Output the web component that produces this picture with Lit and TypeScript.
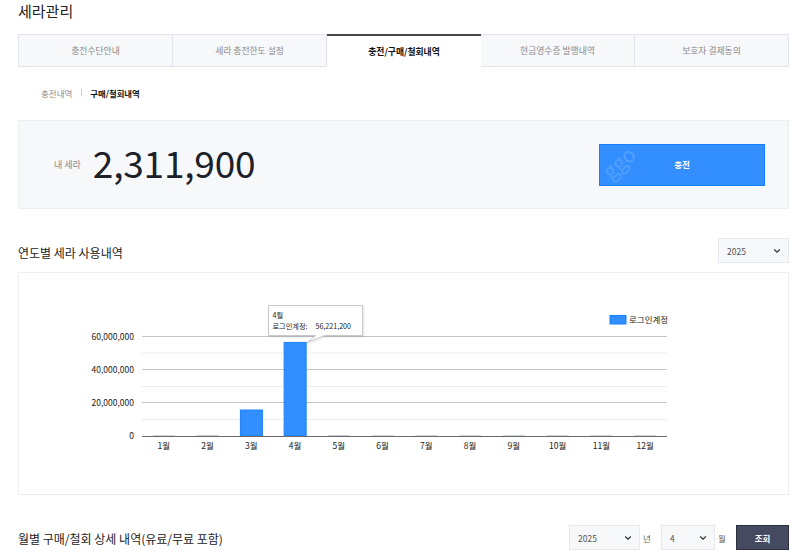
import { LitElement, html, css, svg } from 'lit';
import { customElement } from 'lit/decorators.js';

const tabs = ['충전수단안내', '세라 충전한도 설정', '충전/구매/철회내역', '현금영수증 발행내역', '보호자 결제동의'];
const months = [0.15, 0.4, 15.6, 56.2, 0.4, 0.2, 0.15, 0.15, 0.15, 0.15, 0.15, 0.15];

const PLOT_LEFT = 142;
const PLOT_RIGHT = 667;
const PLOT_BASE = 436;
const PER_MILLION = 33.3 / 20;

@customElement('usage-chart')
export class UsageChart extends LitElement {
  static styles = css`
    :host {
      display: block;
      height: 223px;
      box-sizing: border-box;
      border: 1px solid #eceef1;
    }
    svg {
      display: block;
    }
    text {
      font-family: "Noto Sans CJK KR", "Noto Sans", sans-serif;
      font-size: 8.5px;
      fill: #222;
    }
    text.tip {
      font-size: 7.2px;
    }
    text.tip-value {
      font-size: 7.1px;
    }
    .bubble {
      filter: drop-shadow(1px 1px 1px rgba(0, 0, 0, 0.1));
    }
  `;

  render() {
    const step = (PLOT_RIGHT - PLOT_LEFT) / 12;
    const lines = [336.5, 353, 369.5, 386.5, 402.5, 419.5];
    return html`
      <svg width="769" height="221" viewBox="19 273 769 221">
        ${lines.map((y, i) => svg`
          <line x1=${PLOT_LEFT} x2=${PLOT_RIGHT} y1=${y} y2=${y}
            stroke=${i % 2 ? '#ededed' : '#c4c4c4'} />`)}
        ${[['60,000,000', 340], ['40,000,000', 373], ['20,000,000', 406], ['0', 439]].map(([t, y]) => svg`
          <text x="134" y=${y} text-anchor="end">${t}</text>`)}
        ${months.map((v, i) => {
          const h = Math.max(v * PER_MILLION, 0.6);
          const big = v > 1;
          return svg`
            <rect x=${PLOT_LEFT + step * i + 10.9} y=${PLOT_BASE - h} width="22" height=${h}
              fill=${big ? '#338fff' : '#a9b9c9'} stroke=${big ? '#1780ff' : 'none'} stroke-width="1" />
            <text x=${PLOT_LEFT + step * i + step / 2} y="449" text-anchor="middle">${i + 1}월</text>`;
        })}
        <line x1=${PLOT_LEFT} x2=${PLOT_RIGHT} y1="436.5" y2="436.5" stroke="#6b6b6b" />
        <rect x="610" y="315.5" width="16" height="8.5" fill="#338fff" stroke="#1780ff" />
        <text x="629" y="322.5">로그인계정</text>
        <path class="bubble" d="M268.5 305.5H362.5V335.5H325L307 342.5L316 335.5H268.5Z" fill="#fff" stroke="#c9c9c9" />
        <text class="tip" x="272.5" y="318">4월</text>
        <text class="tip" x="272.5" y="329">로그인계정:</text>
        <text class="tip-value" x="315.5" y="329">56,221,200</text>
      </svg>
    `;
  }
}

@customElement('app-root')
export class AppRoot extends LitElement {
  static styles = css`
    :host {
      display: block;
      height: 555px;
      overflow: hidden;
      background: #fff;
      font-family: "Noto Sans CJK KR", "Noto Sans", sans-serif;
      color: #222;
    }
    .page {
      padding: 0 11px 0 18px;
    }
    h1 {
      margin: 0;
      height: 34px;
      font-size: 15px;
      line-height: 21px;
      font-weight: 400;
      color: #222;
    }
    .tabs {
      display: grid;
      grid-template-columns: 155px repeat(4, 154px);
      height: 33px;
    }
    .tab {
      display: flex;
      align-items: center;
      justify-content: center;
      font-size: 8.8px;
      color: #8a8a8a;
      background: #f7f8fa;
      border: 1px solid #e2e3ec;
      border-left: 0;
    }
    .tab:first-child {
      border-left: 1px solid #e2e3ec;
    }
    .tab.on {
      background: #fff;
      color: #111;
      font-weight: 700;
      border: 0;
      border-top: 2px solid #44464c;
    }
    .sub {
      display: flex;
      align-items: center;
      gap: 8.5px;
      height: 51px;
      padding: 0 0 2px 23px;
      font-size: 8.5px;
      color: #8a8a8a;
    }
    .sub b {
      color: #111;
      font-size: 8.4px;
    }
    .sub i {
      width: 1px;
      height: 7px;
      background: #ccc;
    }
    .balance {
      display: flex;
      align-items: center;
      height: 89px;
      box-sizing: border-box;
      border: 1px solid #eceef1;
      background: #f7f8fa;
      padding: 0 23px 0 35px;
    }
    .balance .label {
      font-size: 9px;
      color: #8a8a8a;
      margin-right: 12px;
    }
    .balance .amount {
      font-size: 37px;
      line-height: 1;
      color: #1d2129;
      letter-spacing: -0.2px;
      margin-bottom: 4px;
    }
    .charge {
      position: relative;
      margin-left: auto;
      width: 166px;
      height: 42px;
      box-sizing: border-box;
      border: 1px solid #1780ff;
      background: #338fff;
      color: #fff;
      font-family: inherit;
      font-size: 8.5px;
      font-weight: 700;
      padding-bottom: 2px;
    }
    .mark {
      position: absolute;
      left: 0;
      top: 4px;
      line-height: 26px;
      font-size: 21px;
      font-weight: 400;
      color: rgba(255, 255, 255, 0.16);
      transform: rotate(-42deg);
    }
    .head {
      display: flex;
      align-items: center;
      justify-content: space-between;
      height: 25px;
    }
    .head.first {
      margin: 29px 0 9px;
    }
    .head.first h2 {
      padding-top: 3px;
    }
    .head.last {
      margin-top: 30px;
    }
    .head.last h2 {
      padding-top: 2px;
    }
    h2 {
      margin: 0;
      font-size: 12px;
      font-weight: 400;
      color: #222;
    }
    .filters {
      display: flex;
      align-items: center;
    }
    .select {
      display: flex;
      align-items: center;
      justify-content: space-between;
      height: 25px;
      box-sizing: border-box;
      border: 1px solid #e8e9ee;
      background: #f7f8fa;
      padding: 0 7px 0 8px;
      font-size: 8.5px;
      color: #555;
    }
    .select svg {
      display: block;
    }
    .y-big { width: 71px; }
    .y-mid { width: 54px; }
    .unit {
      box-sizing: border-box;
      width: 21px;
      padding-left: 3px;
      font-size: 8.5px;
      color: #666;
    }
    .go {
      width: 53px;
      height: 25px;
      box-sizing: border-box;
      border: 1px solid #2b2e3d;
      background: #464a60;
      color: #fff;
      font-family: inherit;
      font-size: 8.5px;
      font-weight: 700;
    }
  `;

  private chevron() {
    return html`<svg width="8" height="6" viewBox="0 0 8 6" fill="none">
      <path d="M1.2 1.5L4 4.2L6.8 1.5" stroke="#333" stroke-width="1.3" />
    </svg>`;
  }

  render() {
    return html`
      <div class="page">
        <h1>세라관리</h1>
        <div class="tabs">
          ${tabs.map((t, i) => html`<div class="tab ${i === 2 ? 'on' : ''}">${t}</div>`)}
        </div>
        <div class="sub"><span>충전내역</span><i></i><b>구매/철회내역</b></div>
        <div class="balance">
          <span class="label">내 세라</span>
          <span class="amount">2,311,900</span>
          <button class="charge"><span class="mark">ggo</span>충전</button>
        </div>
        <div class="head first">
          <h2>연도별 세라 사용내역</h2>
          <div class="select y-big">2025 ${this.chevron()}</div>
        </div>
        <usage-chart></usage-chart>
        <div class="head last">
          <h2>월별 구매/철회 상세 내역(유료/무료 포함)</h2>
          <div class="filters">
            <div class="select y-big">2025 ${this.chevron()}</div>
            <span class="unit">년</span>
            <div class="select y-mid">4 ${this.chevron()}</div>
            <span class="unit">월</span>
            <button class="go">조회</button>
          </div>
        </div>
      </div>
    `;
  }
}
